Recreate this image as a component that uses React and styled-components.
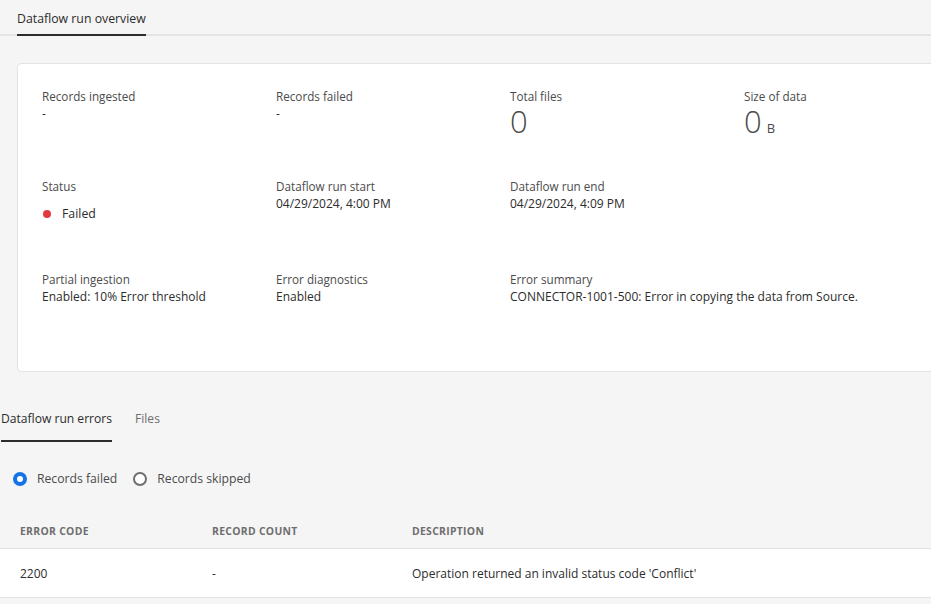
import React from "react";
import styled, { createGlobalStyle } from "styled-components";

const GlobalStyle = createGlobalStyle`
  body {
    margin: 0;
    background-color: #f5f5f5;
    font-family: "Open Sans", "Noto Sans", sans-serif;
    color: #2c2c2c;
    overflow: hidden;
  }
`;

const Page = styled.div`
  width: 931px;
  height: 604px;
  overflow: hidden;
`;

const TopTabs = styled.div`
  display: flex;
  padding-left: 17px;
  border-bottom: 2px solid #e4e4e4;
`;

const Tab = styled.div`
  font-size: ${(p) => (p.$small ? "12.1px" : "12.3px")};
  line-height: 20px;
  padding: ${(p) => (p.$small ? "8px 0 11px" : "9px 0 5px")};
  margin-right: ${(p) => (p.$small ? "23px" : "24px")};
  color: ${(p) => (p.$active ? "#2c2c2c" : "#6e6e6e")};
  border-bottom: 2px solid ${(p) => (p.$active ? "#2c2c2c" : "transparent")};
  margin-bottom: -2px;
`;

const Card = styled.div`
  margin: 27px -20px 0 17px;
  background: #fff;
  border: 1px solid #e3e3e3;
  border-radius: 4px;
  padding: 24px 24px 64px;
  display: grid;
  grid-template-columns: repeat(4, 234px);
  grid-template-rows: 90px 93px auto;
`;

const Field = styled.div`
  display: flex;
  flex-direction: column;
`;

const Label = styled.div`
  font-size: 11.7px;
  line-height: 16px;
  color: #4b4b4b;
`;

const Value = styled.div`
  font-size: 12px;
  line-height: 20px;
  color: #2c2c2c;
`;

const Big = styled.div`
  font-size: 31px;
  font-weight: 300;
  line-height: 34px;
  color: #4b4b4b;
  display: flex;
  align-items: baseline;
  gap: 5px;
`;

const Unit = styled.span`
  font-size: 13px;
  font-weight: 400;
`;

const Status = styled.div`
  display: flex;
  align-items: center;
  gap: 11px;
  font-size: 12.3px;
  margin-top: 11px;
  padding-left: 1px;
`;

const Dot = styled.span`
  width: 8px;
  height: 8px;
  border-radius: 50%;
  background: #e03a3e;
`;

const LowerTabs = styled.div`
  display: flex;
  margin-top: 29px;
  padding-left: 1px;
`;

const Radios = styled.div`
  display: flex;
  align-items: center;
  gap: 16px;
  margin: 29px 0 0 13px;
`;

const Radio = styled.label`
  display: flex;
  align-items: center;
  gap: 10px;
  font-size: 12.2px;
  line-height: 20px;
  color: #4b4b4b;
`;

const Circle = styled.span`
  width: 14px;
  height: 14px;
  box-sizing: border-box;
  border-radius: 50%;
  border: ${(p) => (p.$on ? "4px solid #1473e6" : "2px solid #6e6e6e")};
  background: #fff;
`;

const Table = styled.div`
  margin-top: 25px;
`;

const Row = styled.div`
  display: grid;
  grid-template-columns: 192px 200px 1fr;
  align-items: center;
  padding-left: 20px;
  height: ${(p) => (p.$head ? "34px" : "48px")};
  background: ${(p) => (p.$head ? "transparent" : "#fff")};
  border-bottom: 1px solid #e1e1e1;
`;

const Head = styled.div`
  font-size: 10.4px;
  font-weight: 700;
  letter-spacing: 0.3px;
  text-transform: uppercase;
  color: #6e6e6e;
`;

const Cell = styled.div`
  font-size: 12px;
  color: #2c2c2c;
`;

export default function App() {
  return (
    <Page>
      <GlobalStyle />
      <TopTabs>
        <Tab $active>Dataflow run overview</Tab>
      </TopTabs>
      <Card>
        <Field>
          <Label>Records ingested</Label>
          <Value>-</Value>
        </Field>
        <Field>
          <Label>Records failed</Label>
          <Value>-</Value>
        </Field>
        <Field>
          <Label>Total files</Label>
          <Big>0</Big>
        </Field>
        <Field>
          <Label>Size of data</Label>
          <Big>
            0<Unit>B</Unit>
          </Big>
        </Field>
        <Field>
          <Label>Status</Label>
          <Status>
            <Dot />
            Failed
          </Status>
        </Field>
        <Field>
          <Label>Dataflow run start</Label>
          <Value>04/29/2024, 4:00 PM</Value>
        </Field>
        <Field>
          <Label>Dataflow run end</Label>
          <Value>04/29/2024, 4:09 PM</Value>
        </Field>
        <div />
        <Field>
          <Label>Partial ingestion</Label>
          <Value>Enabled: 10% Error threshold</Value>
        </Field>
        <Field>
          <Label>Error diagnostics</Label>
          <Value>Enabled</Value>
        </Field>
        <Field style={{ gridColumn: "3 / span 2" }}>
          <Label>Error summary</Label>
          <Value>CONNECTOR-1001-500: Error in copying the data from Source.</Value>
        </Field>
      </Card>
      <LowerTabs>
        <Tab $active $small>Dataflow run errors</Tab>
        <Tab $small>Files</Tab>
      </LowerTabs>
      <Radios>
        <Radio>
          <Circle $on />
          Records failed
        </Radio>
        <Radio>
          <Circle />
          Records skipped
        </Radio>
      </Radios>
      <Table>
        <Row $head>
          <Head>Error code</Head>
          <Head>Record count</Head>
          <Head>Description</Head>
        </Row>
        <Row>
          <Cell>2200</Cell>
          <Cell>-</Cell>
          <Cell>Operation returned an invalid status code 'Conflict'</Cell>
        </Row>
      </Table>
    </Page>
  );
}
